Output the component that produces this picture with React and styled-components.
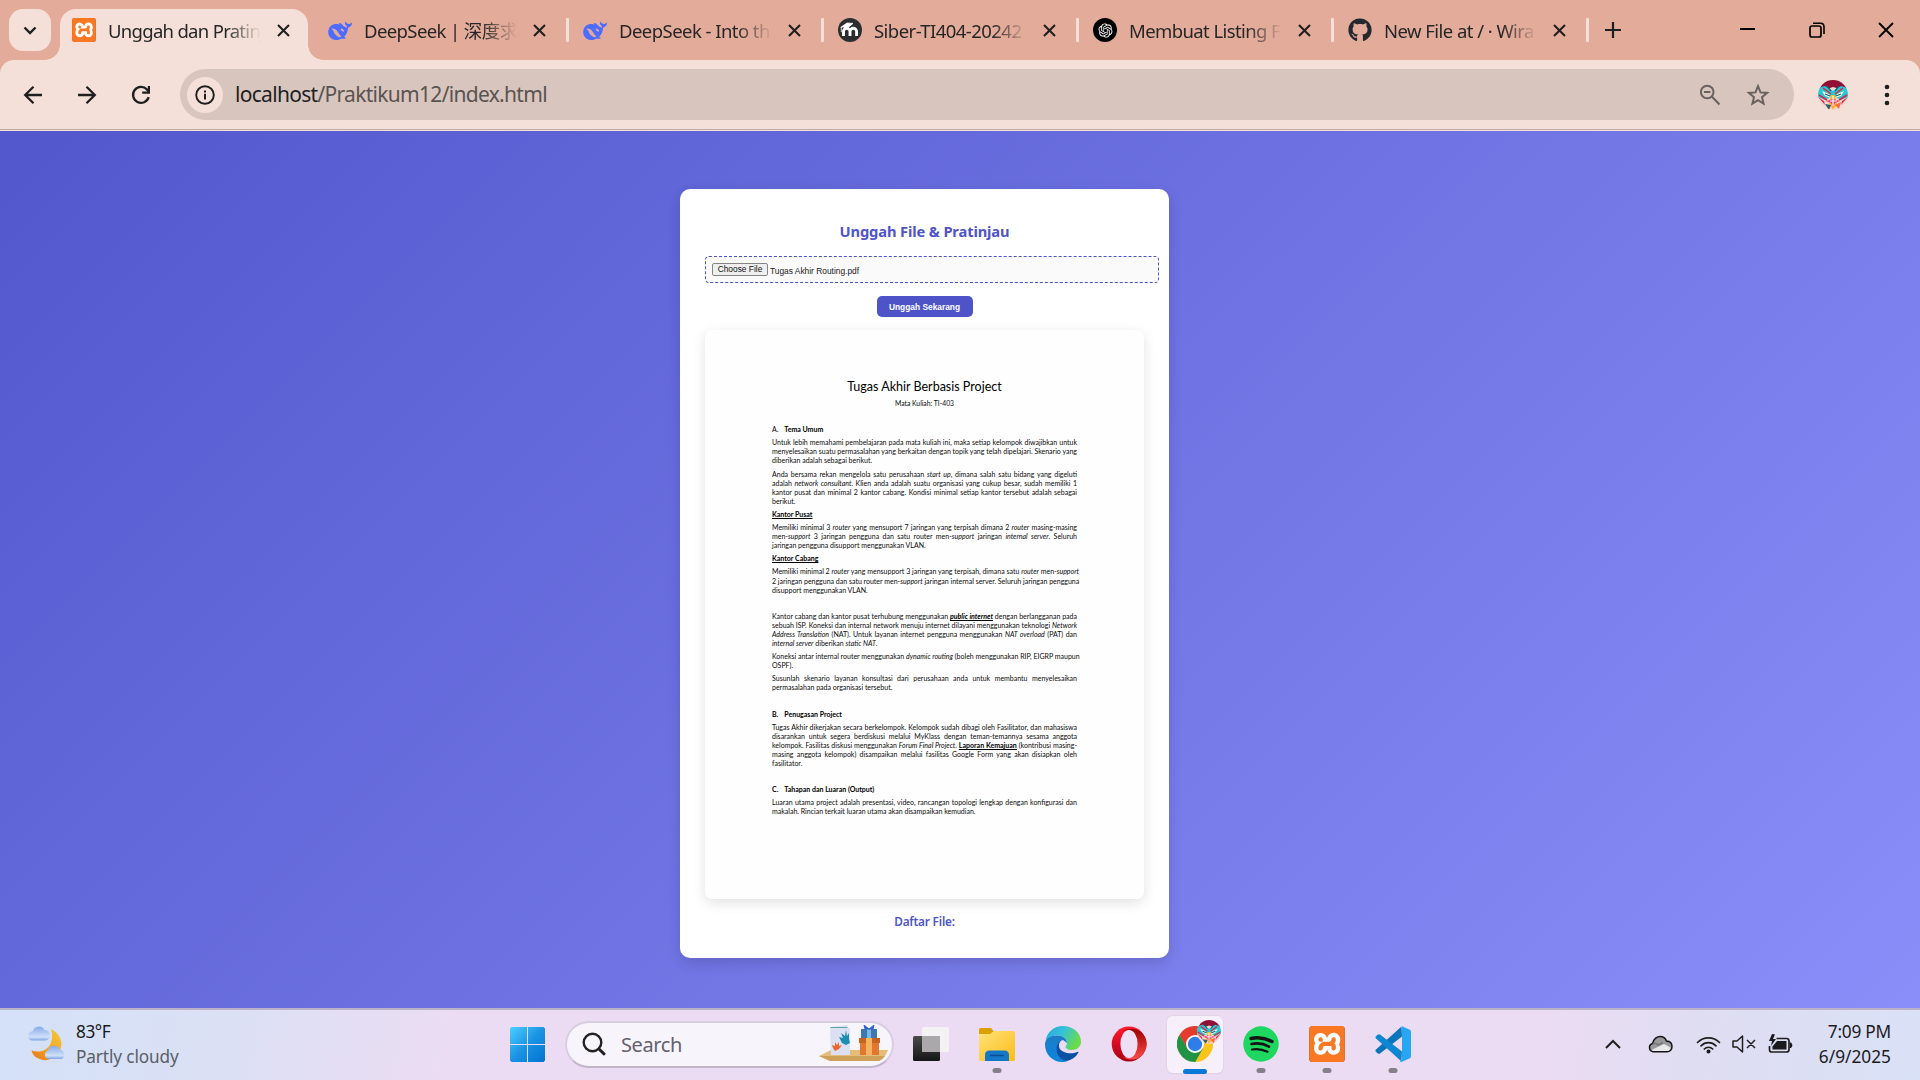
import React from "react";
import styled, { createGlobalStyle } from "styled-components";
import { FaGithub } from "react-icons/fa";
import { RiOpenaiFill } from "react-icons/ri";
import { SiXampp } from "react-icons/si";

const Global = createGlobalStyle`
  * { box-sizing: border-box; }
  html, body { margin: 0; padding: 0; overflow: hidden; }
  body { font-family: "Noto Sans", "Open Sans", "Noto Sans CJK SC", sans-serif; }
  svg { display: block; flex: none; }
`;

const Screen = styled.div`
  width: 1920px;
  height: 1080px;
  display: flex;
  flex-direction: column;
  overflow: hidden;
`;

/* ---------- browser chrome ---------- */
const TabStrip = styled.header`
  height: 60px;
  flex: none;
  display: flex;
  background: #e3ab99;
  padding-left: 9px;
`;
const TabSearch = styled.button`
  width: 42px;
  height: 42px;
  margin: 9px 9px 0 0;
  border: 0;
  padding: 0;
  border-radius: 14px;
  background: #f5e0d9;
  display: grid;
  place-items: center;
`;
const Tab = styled.div`
  position: relative;
  width: ${(p) => (p.$active ? 248 : 255)}px;
  height: 51px;
  margin-top: 9px;
  padding: 0 0 9px ${(p) => (p.$active ? 12 : 14)}px;
  margin-left: ${(p) => p.$gap || 0}px;
  display: flex;
  align-items: center;
  background: ${(p) => (p.$active ? "#f5e0d9" : "transparent")};
  border-radius: 16px 16px 0 0;
  ${(p) =>
    p.$active &&
    `
    &::before, &::after {
      content: "";
      position: absolute;
      bottom: 0;
      width: 15px;
      height: 15px;
    }
    &::before { left: -15px; background: radial-gradient(circle at 0 0, transparent 14.5px, #f5e0d9 15px); }
    &::after { right: -15px; background: radial-gradient(circle at 100% 0, transparent 14.5px, #f5e0d9 15px); }
  `}
`;
const Favicon = styled.span`
  width: 24px;
  height: 24px;
  flex: none;
  display: grid;
  place-items: center;
  border-radius: ${(p) => p.$radius || "0"};
  background: ${(p) => p.$bg || "transparent"};
  color: ${(p) => p.$color || "#fff"};
`;
const TabTitle = styled.span`
  width: 153px;
  margin-left: 12px;
  padding-top: 1px;
  white-space: nowrap;
  font-size: 18.5px;
  line-height: 26px;
  letter-spacing: ${(p) => p.$track}px;
  color: #262626;
  mask-image: linear-gradient(90deg, #000 118px, transparent 153px);
`;
const CloseIcon = styled.span`
  margin-left: 15.5px;
`;
const Separator = styled.i`
  width: 3px;
  height: 24px;
  margin-left: auto;
  border-radius: 1px;
  background: #f5e0d9;
`;
const NewTab = styled.span`
  margin: 22px 0 0 16px;
`;
const WindowControls = styled.div`
  margin-left: auto;
  display: flex;
  height: 59px;
`;
const WindowButton = styled.span`
  width: 69px;
  display: grid;
  place-items: center;
`;
const ToolbarBack = styled.div`
  height: 71px;
  flex: none;
  background: #e3ab99;
`;
const Toolbar = styled.div`
  height: 71px;
  display: flex;
  align-items: flex-start;
  padding-top: 9px;
  background: #f5e0d9;
  border-radius: 14px 14px 0 0;
  box-shadow: inset 0 -1px #f5e0d9, inset 0 -2px #bfaea8;
`;
const Nav = styled.div`
  width: 180px;
  height: 51px;
  padding-left: 22px;
  display: flex;
  align-items: center;
  gap: 32px;
`;
const Omnibox = styled.div`
  width: 1614px;
  height: 51px;
  border-radius: 26px;
  background: #d7c5be;
  display: flex;
  align-items: center;
  padding: 0 24px 0 7px;
`;
const SiteInfo = styled.span`
  width: 36px;
  height: 36px;
  border-radius: 50%;
  background: #f5e0d9;
  display: grid;
  place-items: center;
`;
const Url = styled.span`
  flex: 1;
  margin: -2px 0 0 12px;
  font-size: 21px;
  letter-spacing: -0.7px;
  color: #5b5350;
  b { font-weight: 400; color: #1f1f1f; }
`;
const OmniActions = styled.span`
  display: flex;
  align-items: center;
  gap: 25px;
`;
const ProfileArea = styled.div`
  height: 51px;
  flex: 1;
  display: flex;
  align-items: center;
  padding-left: 24px;
  gap: 36px;
`;

/* ---------- web page ---------- */
const Page = styled.main`
  height: 877px;
  flex: none;
  padding: 58px 0 0 680px;
  background: linear-gradient(135deg, #5257cc, #8a8ef9);
`;
const Card = styled.section`
  width: 489px;
  height: 768.5px;
  padding: 30px 25px 0;
  display: flex;
  flex-direction: column;
  align-items: center;
  background: #fff;
  border-radius: 10px;
  box-shadow: 0 5px 13px rgba(0, 0, 0, 0.14);
`;
const Title = styled.h2`
  margin: 0;
  height: 24px;
  line-height: 24px;
  font-size: 14.7px;
  font-weight: 700;
  letter-spacing: -0.13px;
  color: #4e54c8;
  white-space: nowrap;
`;
const FilePicker = styled.div`
  align-self: flex-start;
  width: 454px;
  height: 27px;
  margin-top: 13px;
  padding-left: 6px;
  display: flex;
  align-items: center;
  border: 1px dashed #4e54c8;
  border-radius: 4px;
  background: #fafafa;
  font: 8.4px/12px "Liberation Sans", Arial, sans-serif;
  color: #333;
`;
const FileName = styled.span`
  padding-top: 2px;
  color: #222;
`;
const ChooseButton = styled.button`
  width: 56px;
  height: 13px;
  margin: 0 2px 1px 0;
  padding: 0;
  border: 1px solid #858585;
  border-radius: 2px;
  background: #efefef;
  color: #111;
  font: 8.4px/10px "Liberation Sans", Arial, sans-serif;
  white-space: nowrap;
`;
const UploadButton = styled.button`
  width: 96px;
  height: 21px;
  margin: 13px 0 13px;
  padding: 1px 0 0;
  border: 0;
  border-radius: 5px;
  background: #4e54c8;
  color: #fff;
  font: 700 8.4px/20px "Liberation Sans", Arial, sans-serif;
  white-space: nowrap;
`;
const Preview = styled.article`
  width: 439px;
  height: 569px;
  flex: none;
  padding: 46px 67px 0;
  border-radius: 7px;
  background: #fefefe;
  box-shadow: 0 4px 13px rgba(0, 0, 0, 0.12);
  font-family: Lato, "Noto Sans", sans-serif;
  color: #0a0a0a;
`;
const DocTitle = styled.h1`
  margin: 0;
  text-align: center;
  font-size: 12.5px;
  line-height: 22px;
  font-weight: 400;
  color: #000;
`;
const DocSubtitle = styled.p`
  margin: -1px 0 16.2px;
  text-align: center;
  font-size: 6.8px;
  line-height: 12px;
`;
const Para = styled.div`
  margin-bottom: 4px;
  font-size: 7px;
  line-height: 9.1px;
`;
const Line = styled.div`
  height: 9.1px;
  white-space: nowrap;
  text-align: justify;
  text-align-last: ${(p) => (p.$last ? "left" : "justify")};
`;
const Blank = styled.div`
  height: 13.1px;
`;
const DocHeading = styled.h3`
  margin: 0 0 4px;
  display: flex;
  font-size: 7px;
  line-height: 9.1px;
  font-weight: 700;
  text-decoration: ${(p) => (p.$underline ? "underline" : "none")};
  color: #000;
`;
const Marker = styled.span`
  width: 12.3px;
  font-weight: ${(p) => (p.$plain ? 400 : 700)};
`;
const Strong = styled.b`
  text-decoration: underline;
  color: #000;
`;
const ListTitle = styled.h3`
  margin: 12px 0 0;
  font-size: 11.8px;
  line-height: 20px;
  font-weight: 600;
  letter-spacing: -0.2px;
  color: #4e54c8;
`;

/* ---------- taskbar ---------- */
const Taskbar = styled.footer`
  height: 72px;
  flex: none;
  display: flex;
  align-items: center;
  padding-bottom: 2px;
  border-top: 2px solid #b9b2c8;
  background: linear-gradient(100deg, #d4e1f8 0%, #dbe0f4 12%, #ecdcf3 24%, #ecdcf3 80%, #dfddf2 88%, #d9e1f6 100%);
`;
const Weather = styled.div`
  width: 510px;
  padding-left: 28px;
  display: flex;
  align-items: center;
  gap: 10px;
`;
const WeatherText = styled.div`
  font-size: 17.2px;
  line-height: 25px;
  letter-spacing: -0.1px;
  color: #5a5e66;
  div:first-child { color: #191919; letter-spacing: -0.4px; }
`;
const SearchPill = styled.div`
  width: 329px;
  height: 47px;
  margin: 0 19px 0 20px;
  padding: 0 1px 0 15px;
  display: flex;
  align-items: center;
  border: 2px solid #d9cde1;
  border-bottom-color: #c2b5cb;
  border-radius: 24px;
  background: #f8f4fc;
`;
const SearchText = styled.span`
  flex: 1;
  margin-left: 15px;
  font-size: 20px;
  letter-spacing: -0.4px;
  color: #62606a;
`;
const AppButton = styled.div`
  position: relative;
  width: ${(p) => (p.$active ? 56 : 36)}px;
  height: ${(p) => (p.$active ? 57 : 36)}px;
  margin: ${(p) => (p.$active ? "0 20px" : "0")};
  margin-left: ${(p) => (p.$active ? 20 : p.$gap ?? 30)}px;
  flex: none;
  display: grid;
  place-items: center;
  border-radius: 6px;
  background: ${(p) => (p.$active ? "#f7f0fa" : "transparent")};
  box-shadow: ${(p) => (p.$active ? "0 0 0 1px #e2d5e8, 0 1px 1px #c9bdd0" : "none")};
`;
const Indicator = styled.i`
  position: absolute;
  left: 50%;
  bottom: ${(p) => (p.$active ? -1 : -11)}px;
  width: ${(p) => (p.$active ? 24 : 9)}px;
  height: 5px;
  transform: translateX(-50%);
  border-radius: 3px;
  background: ${(p) => (p.$active ? "#0a78d6" : "#867f8b")};
`;
const AvatarBadge = styled.span`
  position: absolute;
  top: 4px;
  right: 2px;
`;
const XamppTile = styled.span`
  width: ${(p) => p.$size}px;
  height: ${(p) => p.$size}px;
  display: grid;
  place-items: center;
  color: #f97824;
  background: #fff;
  border-radius: ${(p) => p.$size / 10}px;
  box-shadow: inset 0 0 0 1px #b05516;
  overflow: hidden;
`;
const Tray = styled.div`
  margin-left: auto;
  padding-right: 29px;
  display: flex;
  align-items: center;
`;
const TrayIcon = styled.span`
  width: ${(p) => p.$w}px;
  margin-right: ${(p) => p.$after}px;
  display: grid;
  place-items: center;
`;
const Clock = styled.div`
  width: 76px;
  text-align: right;
  white-space: nowrap;
  font-size: 17.3px;
  line-height: 25px;
  letter-spacing: ${(p) => p.$track || 0}px;
  color: #1b1b1f;
  div:first-child { letter-spacing: -0.25px; }
`;

/* ---------- drawings ---------- */
const stroke = (w, c = "#1f1f1f") => ({ fill: "none", stroke: c, strokeWidth: w });

const XamppIcon = ({ size }) => (
  <XamppTile $size={size}>
    <SiXampp size={size} />
  </XamppTile>
);
const WhaleIcon = () => (
  <svg width="24" height="24" viewBox="0 0 24 24">
    <path
      fill="#4d6bfe"
      d="M23.700 4.800c-.3-.1-.4.100-.6.300-.7.900-1.600 1-2.600.9-1.200-.2-2.100-.9-2.700-2-.2-.4-.5-.6-.7.100-.5 1.600.2 2.900 1.400 3.900.5.400.8.900.4 1.300-.7.400-2-.1-3-1-1.700-1.500-2.300-3-4.300-3.400-.6-.1-1 .3-.6.7.7.8.2.9-.2.800-2.500-.9-5.400-.6-7.600 1.200C.6 9.800 0 12.800.3 15.300c.5 3.400 3.300 6.300 7.200 6.700 2.700.3 4.600-.5 6-1.500.6.300 2.600.6 3.900.1.800-.3.500-.7-.4-1-.9-.3-1-.5-.5-1 2-2.300 3-4.700 3.500-8.100.1-.9.300-1 .9-1.200 1.900-.5 3-2.200 3.100-4.200 0-.2-.1-.3-.3-.3zM11 19.200c-3-1.300-4.500-3.200-5.500-5.900C4.800 11.600 3.900 11 2.500 11c1.900-1.200 4.700-.3 6.300 1.400 1.600 1.800 2.300 4 4.600 5.800-.4.500-1.300 1-2.400 1zm2.900-6.300c-.5-.3-1.200-.6-1.200-1.300 0-.8.7-1.200 1.400-.9 1.500.7 2.400 2.500 1.800 3-.5.400-.7-.5-2-.8z"
    />
  </svg>
);
const MoodleIcon = () => (
  <svg width="24" height="24" viewBox="0 0 24 24">
    <circle cx="12" cy="12" r="12" fill="#2c2d30" />
    <path d="M5.500 18v-4.500a3.200 3.200 0 0 1 6.500 0V18m0-4.500a3.300 3.300 0 0 1 6.600 0V18" fill="none" stroke="#fff" strokeWidth="2.900" />
    <path d="M2.500 9.500 9 5l6 .4-4 3.400-5 .7M3.300 9.200v5" fill="#fff" stroke="#fff" strokeWidth=".8" />
  </svg>
);
const CloseGlyph = () => (
  <svg width="13" height="13" viewBox="0 0 13 13">
    <path d="M1 1l11 11M12 1L1 12" {...stroke(2.1)} />
  </svg>
);
const Avatar = ({ size, id }) => (
  <svg width={size} height={size} viewBox="0 0 30 30">
    <clipPath id={id}><circle cx="15" cy="15" r="15" /></clipPath>
    <g clipPath={`url(#${id})`}>
      <rect width="30" height="30" fill="#f2d9cf" />
      <path d="M2 8L6 0h19l4 8-7 1-7-2-6 2z" fill="#920f35" />
      <path d="M0 8l7-2 8 5 8-5 7 2v9l-7 3-8-4-8 4-7-3z" fill="#24c9d8" />
      <path d="M4 11l7 3 2 4-6-2zM26 11l-7 3-2 4 6-2z" fill="#fff3df" />
      <path d="M5 8l8 6M25 8l-8 6M1 15l8 5M29 15l-8 5" stroke="#e5233d" strokeWidth="1.500" />
      <path d="M9 6l4 5M21 6l-4 5M7 14l5 2M23 14l-5 2" stroke="#0c6573" strokeWidth="1.300" />
      <path d="M13 15h4l2 9-4 6-4-6z" fill="#ffb629" />
      <path d="M8 21l7-2 7 2-5 2-2 4-2-4z" fill="#ef3c73" />
      <path d="M0 17l6 4 1 4zM30 17l-6 4-1 4z" fill="#e0304e" />
      <path d="M7 24l6 1-2 5z" fill="#2c5c74" />
      <path d="M17 25l6-3-2 7z" fill="#ff6b38" />
      <path d="M12 21h7M15 16v10" stroke="#fff" strokeWidth="1.200" />
    </g>
  </svg>
);
const WeatherIcon = () => (
  <svg width="38" height="36" viewBox="0 0 38 36">
    <defs>
      <linearGradient id="moon" x1="1" y1="0" x2="0" y2="1">
        <stop offset="0" stopColor="#f5c842" /><stop offset=".5" stopColor="#f3a91f" /><stop offset="1" stopColor="#e8741a" />
      </linearGradient>
      <linearGradient id="cl" x1="0" y1="0" x2="0" y2="1">
        <stop offset="0" stopColor="#86abe8" /><stop offset=".75" stopColor="#cfe0fa" /><stop offset="1" stopColor="#7ea2df" />
      </linearGradient>
    </defs>
    <path d="M23 3c8 4 12.500 12 9.500 20S21 36 13 33.500C8 32 4.500 29 3.500 24.500 11 27 18 25 21.500 19.500S24.500 8 23 3z" fill="url(#moon)" />
    <path d="M4.500 14.500a4.500 4.500 0 0 1 0-9A6.500 6.500 0 0 1 16.500 4a5.300 5.300 0 0 1 1 10.500z" fill="url(#cl)" />
    <path d="M20 33a4.500 4.500 0 0 1 0-8.500 6.300 6.300 0 0 1 12-.5 4.700 4.700 0 0 1 1.500 9z" fill="url(#cl)" />
  </svg>
);
const WindowsIcon = () => (
  <svg width="35" height="35" viewBox="0 0 35 35">
    <defs>
      <linearGradient id="win" x1="0" y1="0" x2="1" y2="1" gradientUnits="objectBoundingBox">
        <stop offset="0" stopColor="#4bd0ff" /><stop offset=".5" stopColor="#1a94e3" /><stop offset="1" stopColor="#0072cf" />
      </linearGradient>
    </defs>
    <path fill="url(#win)" d="M1.500 0H17v17H0V1.500zM18 0h15.500L35 1.500V17H18zM0 18h17v17H1.500L0 33.500zM18 18h17v15.500L33.500 35H18z" />
  </svg>
);
const GiftArt = () => (
  <svg width="72" height="38" viewBox="0 0 72 38">
    <path d="M0 31l12-6h57q-3 8-9 11H11z" fill="#e5bd78" />
    <path d="M0 31h66q-3 4-6 5H11z" fill="#cfa059" />
    <path d="M11 2l18-2-1 3h3v27H12z" fill="#dbe0f3" />
    <path d="M11 2h18l-1 1H12z" fill="#5fa3a6" />
    <path d="M20 12l4 1-2-5 4 3 1-6 1 6 2-3v6l1 4-4 2-4-2z" fill="#1b8fb0" />
    <path d="M13 20l3 1v-4l2 3 2-3v4l3-1-3 4-4 2-2-3z" fill="#ec652c" />
    <path d="M42 4h16v10H42z" fill="#3d79ae" />
    <path d="M48 4h4v10h-4z" fill="#77b9ea" />
    <path d="M50 4l-5-4 1 4zM50 4l5-4-1 4z" fill="#2f64c8" stroke="#2f64c8" />
    <path d="M41 15h19v15H41z" fill="#e0792f" />
    <path d="M40 13h21v5H40z" fill="#c5631f" />
    <path d="M47 13h6v17h-6z" fill="#f4b45f" />
  </svg>
);
const TaskViewIcon = () => (
  <svg width="36" height="34" viewBox="0 0 36 34">
    <defs><linearGradient id="tv" x1="0" y1="0" x2="0" y2="1"><stop offset="0" stopColor="#4c4a4c" /><stop offset="1" stopColor="#151515" /></linearGradient></defs>
    <rect y="9" width="27" height="25" rx="1.500" fill="url(#tv)" />
    <rect x="9" width="27" height="25" rx="1.500" fill="#f4f3f4" />
    <path d="M9 9h18v16H9z" fill="#aaa8aa" />
  </svg>
);
const FolderIcon = () => (
  <svg width="36" height="36" viewBox="0 0 36 36">
    <defs><linearGradient id="fo" x1="0" y1="0" x2="1" y2="1"><stop offset="0" stopColor="#ffe27a" /><stop offset="1" stopColor="#fcbc17" /></linearGradient></defs>
    <path d="M0 3.500Q0 2 1.500 2H12l3 3.500V10H0z" fill="#dca000" />
    <path d="M0 8h11l4-3h19.500Q36 5 36 6.500v27Q36 35 34.500 35h-33Q0 35 0 33.500z" fill="url(#fo)" />
    <path d="M6 35v-6q0-4.500 4.500-4.500h15Q30 24.500 30 29v6z" fill="#1577c8" />
    <path d="M11 29.500h14" stroke="#0c4d92" strokeWidth="1.500" />
  </svg>
);
const EdgeIcon = () => (
  <svg width="36" height="36" viewBox="0 0 36 36">
    <defs>
      <linearGradient id="eg1" x1="0" y1="0" x2="1" y2=".4"><stop offset="0" stopColor="#26a5dc" /><stop offset=".5" stopColor="#35c2dc" /><stop offset="1" stopColor="#68dc4a" /></linearGradient>
      <linearGradient id="eg2" x1="0" y1="0" x2="0" y2="1"><stop offset="0" stopColor="#1c7cc4" /><stop offset="1" stopColor="#0a86e0" /></linearGradient>
    </defs>
    <path d="M.5 15C2 6 9 0 18 0c10 0 18 7 18 15.500 0 5.500-4 8.500-9 8.500-4 0-6.500-1.500-6.500-3 0-1 1.500-1.500 1.500-4C22 13 18 9.500 12.500 9.500 7 9.500 2 12 .5 15z" fill="url(#eg1)" />
    <path d="M0 18.500C0 12.500 5.500 9.500 12 9.500c6 0 10 3.500 10 7.500l-4-3c-4 1-6.500 5-5.500 10 1 5 5 9.500 10 11-2 .8-3 1-5 1C7.500 36 0 28.500 0 18.500z" fill="url(#eg2)" />
    <path d="M16 14.200c-6 3.300-7.500 17.800 6 20.800 5-1 9-4 11.300-8.200.5-.8-.2-1.200-1-.8-7.500 3.500-19.300 0-18.300-7 .2-2 1-3.500 2-4.800z" fill="#0c50a4" />
  </svg>
);
const OperaIcon = () => (
  <svg width="36" height="36" viewBox="0 0 36 36">
    <defs>
      <linearGradient id="op1" x1="0" y1="0" x2="0" y2="1"><stop offset="0" stopColor="#ff1b2d" /><stop offset="1" stopColor="#a70014" /></linearGradient>
      <linearGradient id="op2" x1="0" y1="0" x2="0" y2="1"><stop offset="0" stopColor="#9c0000" /><stop offset="1" stopColor="#ff4b4b" /></linearGradient>
    </defs>
    <ellipse cx="18" cy="18" rx="17.300" ry="17.500" fill="url(#op1)" />
    <path d="M11.500 5.500C16 2.500 22 1.500 29 5c9 7 9 19 0 26-6 4-13 3-17.500-.5C17 34 26.500 29 26.500 18S17 2 11.500 5.500z" fill="url(#op2)" />
    <ellipse cx="18" cy="18" rx="8.600" ry="14" fill="#eedff5" />
  </svg>
);
const ChromeIcon = () => (
  <svg width="36" height="36" viewBox="0 0 36 36">
    <path d="M18 18L2.400 9A18 18 0 0 1 33.600 9z" fill="#e33b2e" />
    <path d="M18 18L33.600 9A18 18 0 0 1 18 36z" fill="#fcc31a" />
    <path d="M2.400 9A18 18 0 0 0 18 36l7.800-13.500L10.200 22.500z" fill="#229342" />
    <path d="M18 9h15.600l-7.800 13.500L18 27z" fill="#fcc31a" />
    <path d="M18 36l7.800-13.500H18z" fill="#229342" />
    <path d="M2.400 9l7.800 13.500L18 9z" fill="#e33b2e" />
    <path d="M2.400 9a18 18 0 0 0-1.500 14L10 21.500z" fill="#229342" />
    <circle cx="18" cy="18" r="9" fill="#fff" />
    <circle cx="18" cy="18" r="7.200" fill="#2f7de9" />
  </svg>
);
const SpotifyIcon = () => (
  <svg width="36" height="36" viewBox="0 0 36 36">
    <circle cx="18" cy="18" r="17.700" fill="#1ed760" />
    <g fill="none" stroke="#141414" strokeLinecap="round">
      <path d="M8 12.500c7-1.500 14-.7 21 3" strokeWidth="3.400" />
      <path d="M8.500 18c6-1.300 12-.5 17.500 2.600" strokeWidth="2.700" />
      <path d="M9 23.500c5-1 10-.5 15.500 2.300" strokeWidth="2.200" />
    </g>
  </svg>
);
const CodeIcon = () => (
  <svg width="36" height="36" viewBox="0 0 36 36">
    <path d="M26.500.6L1 23.500q-1.200 1.200 0 2.300l1.800 1.600q1 .9 2.200 0L27 10.500z" fill="#0a74bd" />
    <path d="M26.500 35.400L1 12.500q-1.200-1.200 0-2.300l1.800-1.600q1-.9 2.200 0L27 25.500z" fill="#0f86d2" />
    <path d="M27 .2l7.800 3.600Q36 4.400 36 5.800v24.400q0 1.400-1.200 2L27 35.800q-1.300.4-2.200-.6L27 34z" fill="#28a6f1" />
  </svg>
);

const CloudTray = () => (
  <svg width="25" height="18" viewBox="0 0 25 18">
    <path d="M5 16.700a4.200 4.200 0 0 1-.4-8.200C5.500 3.500 9.500 1.500 12 1.500c3 0 5.500 1.800 6.500 4.500 4 .3 5.500 3 5.500 5.500 0 3-2 5.200-5 5.200z" fill="#9a9a9d" stroke="#151517" strokeWidth="1.500" />
    <path d="M5 15.900l-1.500-1 12.500-6 6.500 3.500c-.2 2-1.500 3.500-3.500 3.500z" fill="#e9e9eb" />
    <path d="M5 9c1-1 3.500-.5 5 1l5-2.500" stroke="#77777b" strokeWidth="1.500" fill="none" />
  </svg>
);
const WifiIcon = () => (
  <svg width="25" height="19" viewBox="0 0 25 19">
    <g {...stroke(1.7)} strokeLinecap="round">
      <path d="M1.500 7.500a15.500 15.500 0 0 1 22 0" />
      <path d="M5 10.800a10.500 10.500 0 0 1 15 0" />
      <path d="M8.300 14a5.900 5.900 0 0 1 8.400 0" />
    </g>
    <circle cx="12.500" cy="16.500" r="2" fill="#1b1b1f" />
  </svg>
);
const MuteIcon = () => (
  <svg width="24" height="18" viewBox="0 0 24 18">
    <path d="M1 6h4l5.500-5v16L5 12H1zM15 5l8 8M23 5l-8 8" {...stroke(1.500)} strokeLinejoin="round" />
  </svg>
);
const BatteryIcon = () => (
  <svg width="25" height="20" viewBox="0 0 25 20">
    <path d="M8.500 4.500h10q2.500 0 2.500 2.500v8.500q0 2.500-2.500 2.500H3.500Q1.500 18 1.500 15.500V12" {...stroke(1.700)} />
    <path d="M9 7h9.500v8.500H4.500v-3z" fill="#1b1b1f" />
    <path d="M22 8.500h1q1.300 1 1.300 2.700T23 14h-1z" fill="#1b1b1f" />
    <path d="M4 0L1 7h3l-1 5 5-7H5l2-4.500z" fill="#1b1b1f" />
  </svg>
);

/* ---------- content ---------- */
const tabs = [
  { title: "Unggah dan Pratinj", active: true, track: -0.7, icon: <Favicon><XamppIcon size={24} /></Favicon> },
  { title: "DeepSeek | 深度求", gap: 6, track: -0.6, icon: <Favicon><WhaleIcon /></Favicon> },
  { title: "DeepSeek - Into th", track: -0.55, icon: <Favicon><WhaleIcon /></Favicon> },
  { title: "Siber-TI404-20242", track: -0.55, icon: <Favicon><MoodleIcon /></Favicon> },
  { title: "Membuat Listing F", track: -0.6, icon: <Favicon $bg="#000" $radius="50%"><RiOpenaiFill size={17} /></Favicon> },
  { title: "New File at / · Wira", track: -0.55, icon: <Favicon $color="#24292f"><FaGithub size={24} /></Favicon> },
];

const I = ({ children }) => <i>{children}</i>;
const P = ({ lines }) => (
  <Para>
    {lines.map((l, i) => (
      <Line key={i} $last={i === lines.length - 1}>{l}</Line>
    ))}
  </Para>
);

const Document = () => (
  <Preview>
    <DocTitle>Tugas Akhir Berbasis Project</DocTitle>
    <DocSubtitle>Mata Kuliah: TI-403</DocSubtitle>
    <DocHeading><Marker $plain>A.</Marker>Tema Umum</DocHeading>
    <P lines={[
      "Untuk lebih memahami pembelajaran pada mata kuliah ini, maka setiap kelompok diwajibkan untuk",
      "menyelesaikan suatu permasalahan yang berkaitan dengan topik yang telah dipelajari. Skenario yang",
      "diberikan adalah sebagai berikut.",
    ]} />
    <P lines={[
      <>Anda bersama rekan mengelola satu perusahaan <I>start up</I>, dimana salah satu bidang yang digeluti</>,
      <>adalah <I>network consultant</I>. Klien anda adalah suatu organisasi yang cukup besar, sudah memiliki 1</>,
      "kantor pusat dan minimal 2 kantor cabang. Kondisi minimal setiap kantor tersebut adalah sebagai",
      "berikut.",
    ]} />
    <DocHeading $underline>Kantor Pusat</DocHeading>
    <P lines={[
      <>Memiliki minimal 3 <I>router</I> yang mensuport 7 jaringan yang terpisah dimana 2 <I>router</I> masing-masing</>,
      <>men-<I>support</I> 3 jaringan pengguna dan satu router men-<I>support</I> jaringan <I>internal server</I>. Seluruh</>,
      "jaringan pengguna disupport menggunakan VLAN.",
    ]} />
    <DocHeading $underline>Kantor Cabang</DocHeading>
    <P lines={[
      <>Memiliki minimal 2 <I>router</I> yang mensupport 3 jaringan yang terpisah, dimana satu <I>router</I> men-<I>support</I></>,
      <>2 jaringan pengguna dan satu router men-<I>support</I> jaringan internal server. Seluruh jaringan pengguna</>,
      "disupport menggunakan VLAN.",
    ]} />
    <Blank />
    <P lines={[
      <>Kantor cabang dan kantor pusat terhubung menggunakan <Strong><I>public internet</I></Strong> dengan berlangganan pada</>,
      <>sebuah ISP. Koneksi dan internal network menuju internet dilayani menggunakan teknologi <I>Network</I></>,
      <><I>Address Translation</I> (NAT). Untuk layanan internet pengguna menggunakan <I>NAT overload</I> (PAT) dan</>,
      <><I>internal server</I> diberikan <I>static NAT</I>.</>,
    ]} />
    <P lines={[
      <>Koneksi antar internal router menggunakan <I>dynamic routing</I> (boleh menggunakan RIP, EIGRP maupun</>,
      "OSPF).",
    ]} />
    <P lines={[
      "Susunlah skenario layanan konsultasi dari perusahaan anda untuk membantu menyelesaikan",
      "permasalahan pada organisasi tersebut.",
    ]} />
    <Blank />
    <DocHeading><Marker>B.</Marker>Penugasan Project</DocHeading>
    <P lines={[
      "Tugas Akhir dikerjakan secara berkelompok. Kelompok sudah dibagi oleh Fasilitator, dan mahasiswa",
      "disarankan untuk segera berdiskusi melalui MyKlass dengan teman-temannya sesama anggota",
      <>kelompok. Fasilitas diskusi menggunakan <I>Forum Final Project</I>. <Strong>Laporan Kemajuan</Strong> (kontribusi masing-</>,
      "masing anggota kelompok) disampaikan melalui fasilitas Google Form yang akan disiapkan oleh",
      "fasilitator.",
    ]} />
    <Blank />
    <DocHeading><Marker>C.</Marker>Tahapan dan Luaran (Output)</DocHeading>
    <P lines={[
      "Luaran utama project adalah presentasi, video, rancangan topologi lengkap dengan konfigurasi dan",
      "makalah. Rincian terkait luaran utama akan disampaikan kemudian.",
    ]} />
  </Preview>
);

export default function App() {
  return (
    <Screen>
      <Global />
      <TabStrip>
        <TabSearch>
          <svg width="14" height="9" viewBox="0 0 14 9"><path d="M1.500 1.500L7 7l5.500-5.500" {...stroke(2.4)} /></svg>
        </TabSearch>
        {tabs.map((t, i) => (
          <Tab key={i} $active={t.active} $gap={t.gap}>
            {t.icon}
            <TabTitle $track={t.track}>{t.title}</TabTitle>
            <CloseIcon><CloseGlyph /></CloseIcon>
            {!t.active && <Separator />}
          </Tab>
        ))}
        <NewTab>
          <svg width="16" height="16" viewBox="0 0 16 16"><path d="M8 0v16M0 8h16" {...stroke(2.2)} /></svg>
        </NewTab>
        <WindowControls>
          <WindowButton><svg width="15" height="4"><path d="M0 1h15" {...stroke(2, "#000")} /></svg></WindowButton>
          <WindowButton>
            <svg width="16" height="16" viewBox="0 0 16 16">
              <rect x="1" y="4" width="11" height="11" rx="2" {...stroke(1.700, "#000")} />
              <path d="M4 1.200h7.500q3.500 0 3.500 3.500V12" {...stroke(1.600, "#000")} />
            </svg>
          </WindowButton>
          <WindowButton>
            <svg width="16" height="16" viewBox="0 0 16 16"><path d="M1 1l14 14M15 1L1 15" {...stroke(1.800, "#000")} /></svg>
          </WindowButton>
        </WindowControls>
      </TabStrip>
      <ToolbarBack>
        <Toolbar>
          <Nav>
            <svg width="22" height="20" viewBox="0 0 22 20"><path d="M20 10H4M11.500 1.700L3.200 10l8.300 8.300" {...stroke(2.300)} /></svg>
            <svg width="22" height="20" viewBox="0 0 22 20"><path d="M2 10h16M10.500 1.700l8.300 8.300-8.300 8.300" {...stroke(2.300)} /></svg>
            <svg width="22" height="20" viewBox="0 0 22 20"><path d="M18.700 12.200A8 8 0 1 1 17 4.500l1.500 2" {...stroke(2.300)} /><path d="M20 1v7.800h-7.800V6.600h5.600V1z" fill="#1f1f1f" /></svg>
          </Nav>
          <Omnibox>
            <SiteInfo>
              <svg width="20" height="20" viewBox="0 0 20 20">
                <circle cx="10" cy="10" r="8.800" {...stroke(1.900)} />
                <path d="M10 8.800v5.600M10 5.400v2" {...stroke(2)} />
              </svg>
            </SiteInfo>
            <Url><b>localhost</b>/Praktikum12/index.html</Url>
            <OmniActions>
              <svg width="22" height="22" viewBox="0 0 22 22">
                <circle cx="8.200" cy="8" r="6.300" {...stroke(2, "#6a625f")} />
                <path d="M5 8h6.400M12.800 12.600l7.700 7.800" {...stroke(2.100, "#6a625f")} />
              </svg>
              <svg width="24" height="24" viewBox="0 0 24 24">
                <path d="M12 3.200l2.500 6.200 6.600.5-5.100 4.300 1.600 6.500L12 17.200l-5.600 3.500L8 14.200 2.900 9.900l6.600-.5z" {...stroke(2, "#6a625f")} />
              </svg>
            </OmniActions>
          </Omnibox>
          <ProfileArea>
            <Avatar size={30} id="av1" />
            <svg width="6" height="22" viewBox="0 0 6 22"><g fill="#1f1f1f"><circle cx="3" cy="3" r="2.300" /><circle cx="3" cy="11" r="2.300" /><circle cx="3" cy="19" r="2.300" /></g></svg>
          </ProfileArea>
        </Toolbar>
      </ToolbarBack>

      <Page>
        <Card>
          <Title>Unggah File &amp; Pratinjau</Title>
          <FilePicker>
            <ChooseButton>Choose File</ChooseButton>
            <FileName>Tugas Akhir Routing.pdf</FileName>
          </FilePicker>
          <UploadButton>Unggah Sekarang</UploadButton>
          <Document />
          <ListTitle>Daftar File:</ListTitle>
        </Card>
      </Page>

      <Taskbar>
        <Weather>
          <WeatherIcon />
          <WeatherText><div>83°F</div><div>Partly cloudy</div></WeatherText>
        </Weather>
        <WindowsIcon />
        <SearchPill>
          <svg width="24" height="24" viewBox="0 0 24 24">
            <circle cx="10.500" cy="10.500" r="8.800" {...stroke(2.400, "#222")} />
            <path d="M17 17l5 4.800" {...stroke(3, "#222")} strokeLinecap="round" />
          </svg>
          <SearchText>Search</SearchText>
          <GiftArt />
        </SearchPill>
        <AppButton $gap={0}><TaskViewIcon /></AppButton>
        <AppButton><FolderIcon /><Indicator /></AppButton>
        <AppButton><EdgeIcon /></AppButton>
        <AppButton><OperaIcon /></AppButton>
        <AppButton $active>
          <ChromeIcon />
          <AvatarBadge><Avatar size={24} id="av2" /></AvatarBadge>
          <Indicator $active />
        </AppButton>
        <AppButton $gap={0}><SpotifyIcon /><Indicator /></AppButton>
        <AppButton><XamppIcon size={36} /><Indicator /></AppButton>
        <AppButton><CodeIcon /><Indicator /></AppButton>
        <Tray>
          <TrayIcon $w={16} $after={27}><svg width="16" height="10" viewBox="0 0 16 10"><path d="M1 9l7-7 7 7" {...stroke(2)} /></svg></TrayIcon>
          <TrayIcon $w={25} $after={23}><CloudTray /></TrayIcon>
          <TrayIcon $w={25} $after={11}><WifiIcon /></TrayIcon>
          <TrayIcon $w={24} $after={12}><MuteIcon /></TrayIcon>
          <TrayIcon $w={25} $after={22}><BatteryIcon /></TrayIcon>
          <Clock><div>7:09 PM</div><div>6/9/2025</div></Clock>
        </Tray>
      </Taskbar>
    </Screen>
  );
}
